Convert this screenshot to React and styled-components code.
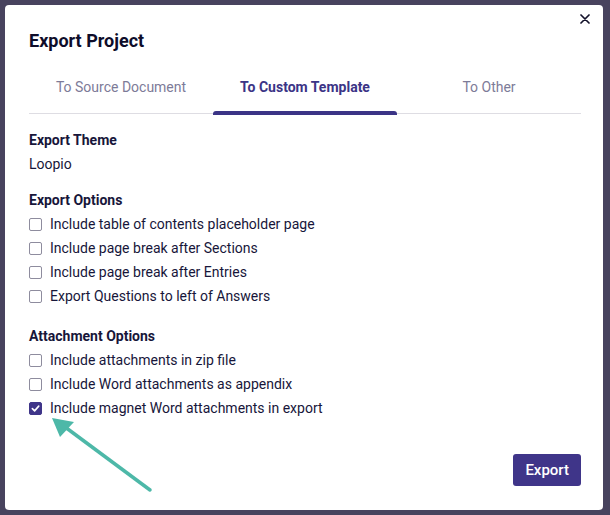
import styled, { createGlobalStyle } from "styled-components"

const GlobalStyle = createGlobalStyle`
  html, body {
    margin: 0;
    padding: 0;
    background: #48435e;
  }
  body {
    font-family: Roboto, "Liberation Sans", sans-serif;
  }
`

const tabs = ["To Source Document", "To Custom Template", "To Other"]

const exportOptions = [
  { label: "Include table of contents placeholder page" },
  { label: "Include page break after Sections" },
  { label: "Include page break after Entries" },
  { label: "Export Questions to left of Answers" },
]

const attachmentOptions = [
  { label: "Include attachments in zip file" },
  { label: "Include Word attachments as appendix" },
  { label: "Include magnet Word attachments in export", checked: true },
]

const CheckRow = ({ label, checked }) => (
  <Row>
    <Box $checked={checked}>
      {checked && (
        <svg width="9" height="9" viewBox="0 0 10 10">
          <path d="M1.5 5.2 L4 7.6 L8.6 2.4" fill="none" stroke="#fff" strokeWidth="1.8" strokeLinecap="round" strokeLinejoin="round" />
        </svg>
      )}
    </Box>
    <span>{label}</span>
  </Row>
)

const App = () => {
  return (
    <Backdrop>
      <GlobalStyle />
      <Modal>
        <Close>
          <svg width="10" height="10" viewBox="0 0 10 10">
            <path d="M1 1 L9 9 M9 1 L1 9" stroke="#14132b" strokeWidth="1.7" strokeLinecap="round" />
          </svg>
        </Close>
        <Title>Export Project</Title>

        <Tabs>
          {tabs.map((tab, index) => (
            <Tab key={tab} $active={index === 1}>{tab}</Tab>
          ))}
        </Tabs>

        <Content>
          <Label>Export Theme</Label>
          <Value>Loopio</Value>

          <Label $gap={12}>Export Options</Label>
          {exportOptions.map((opt) => (
            <CheckRow key={opt.label} {...opt} />
          ))}

          <Label $gap={16}>Attachment Options</Label>
          {attachmentOptions.map((opt) => (
            <CheckRow key={opt.label} {...opt} />
          ))}
        </Content>

        <Footer>
          <ExportButton>Export</ExportButton>
        </Footer>

        {/* teal annotation arrow pointing at the checked box */}
        <Arrow width="110" height="85" viewBox="0 0 110 85">
          <line x1="103" y1="77" x2="14" y2="11" stroke="#4db8a8" strokeWidth="3.5" strokeLinecap="round" />
          <polygon points="5,5 13,24 27,9" fill="#4db8a8" />
        </Arrow>
      </Modal>
    </Backdrop>
  )
}

export default App

const Backdrop = styled.div`
  width: 610px;
  height: 515px;
  padding: 5px 7px 5px 5px;
  box-sizing: border-box;
  background: #48435e;
`

const Modal = styled.div`
  position: relative;
  width: 598px;
  height: 505px;
  box-sizing: border-box;
  padding: 24px 22px 24px 24px;
  background: #fff;
  border-radius: 4px;
  display: flex;
  flex-direction: column;
`

const Close = styled.div`
  position: absolute;
  top: 9px;
  right: 13px;
  display: flex;
`

const Title = styled.h2`
  margin: 0;
  font-size: 18px;
  line-height: 24px;
  font-weight: 700;
  color: #0e0d2a;
`

const Tabs = styled.div`
  display: grid;
  grid-template-columns: repeat(3, 1fr);
  margin-top: 10px;
  border-bottom: 1px solid #dedde3;
`

const Tab = styled.div`
  position: relative;
  text-align: center;
  padding: 14px 0 16px;
  font-size: 14px;
  line-height: 20px;
  font-weight: ${({ $active }) => ($active ? 700 : 400)};
  color: ${({ $active }) => ($active ? "#3b3486" : "#7d7b98")};

  &::after {
    content: "";
    display: ${({ $active }) => ($active ? "block" : "none")};
    position: absolute;
    left: 0;
    right: 0;
    bottom: -2px;
    height: 4px;
    background: #3b3486;
    border-radius: 3px 3px 0 0;
  }
`

const Content = styled.div`
  display: flex;
  flex-direction: column;
  margin-top: 14px;
  font-size: 14px;
  color: #17163a;
`

const Label = styled.div`
  font-weight: 700;
  line-height: 24px;
  margin-top: ${({ $gap }) => ($gap || 0)}px;
`

const Value = styled.div`
  line-height: 24px;
`

const Row = styled.label`
  display: flex;
  align-items: center;
  gap: 8px;
  line-height: 24px;
`

const Box = styled.span`
  width: 13px;
  height: 13px;
  box-sizing: border-box;
  border-radius: 2px;
  border: 1px solid ${({ $checked }) => ($checked ? "#3f3589" : "#8e8c9e")};
  background: ${({ $checked }) => ($checked ? "#3f3589" : "#fff")};
  display: flex;
  align-items: center;
  justify-content: center;
`

const Footer = styled.div`
  margin-top: auto;
  display: flex;
  justify-content: flex-end;
`

const ExportButton = styled.button`
  height: 32px;
  padding: 0 12px;
  border: none;
  border-radius: 3px;
  background: #3f3589;
  color: #fff;
  font-family: Roboto, "Liberation Sans", sans-serif;
  font-size: 15px;
  font-weight: 500;
  cursor: pointer;
`

const Arrow = styled.svg`
  position: absolute;
  left: 42px;
  top: 408px;
`
